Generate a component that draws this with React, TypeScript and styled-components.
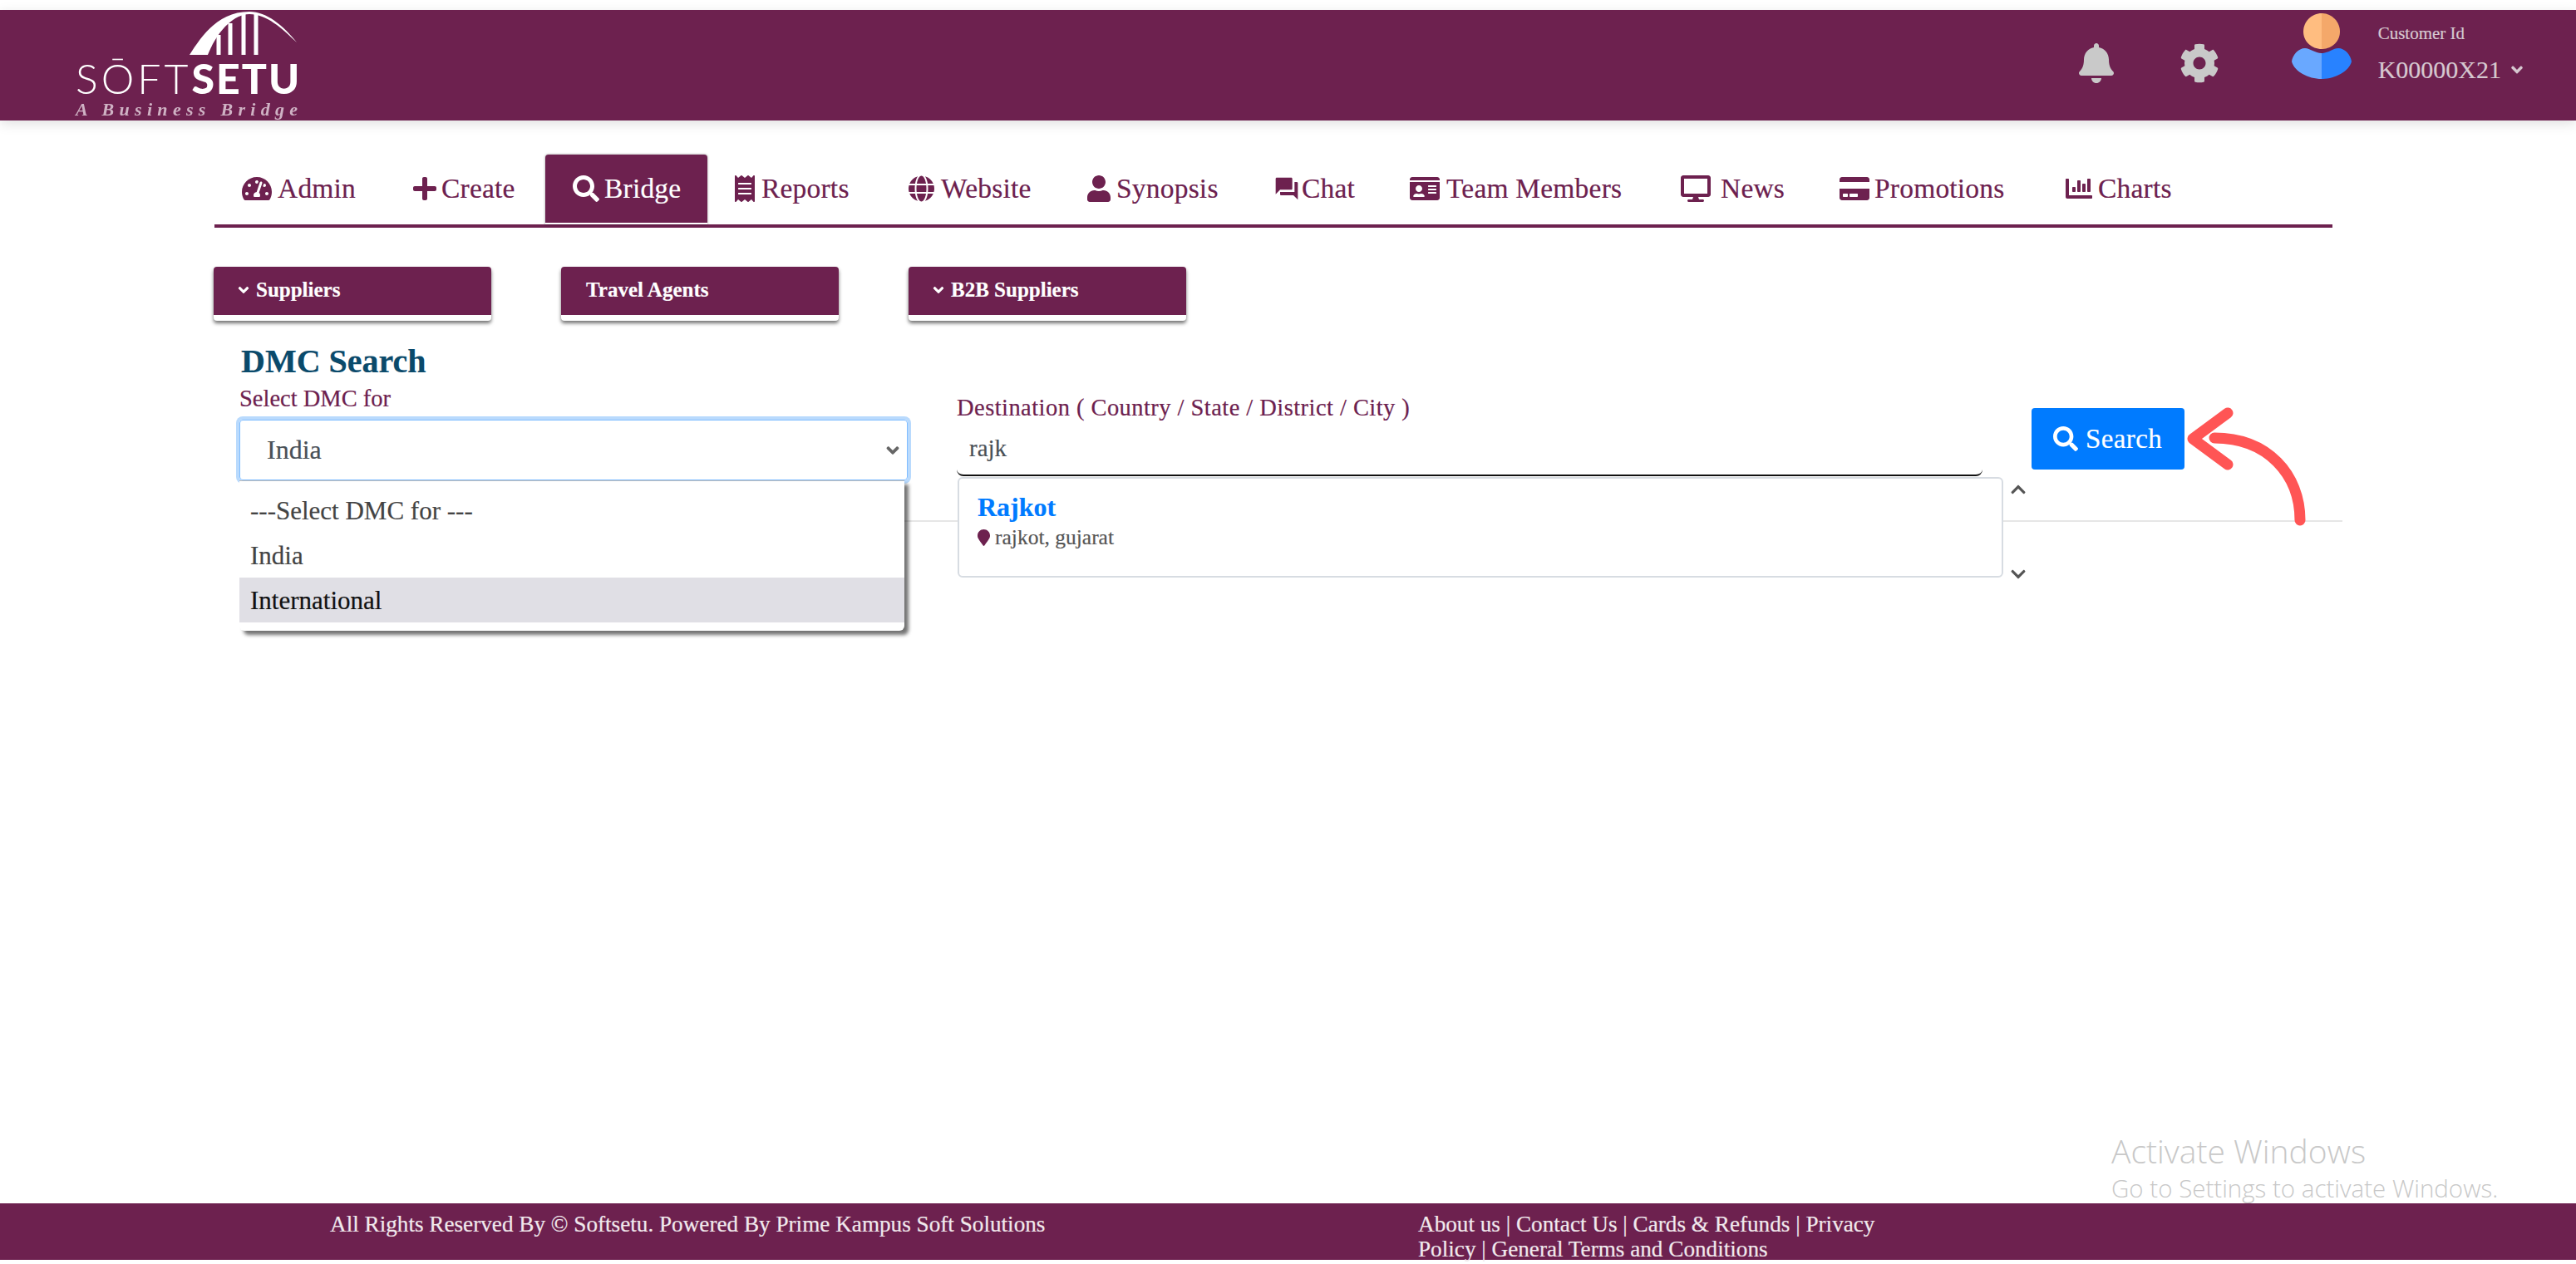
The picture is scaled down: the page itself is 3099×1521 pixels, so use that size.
import React from 'react';
import styled, { createGlobalStyle } from 'styled-components';
import {
  FaAngleDown,
  FaBell,
  FaChartBar,
  FaChevronDown,
  FaChevronUp,
  FaCog,
  FaCreditCard,
  FaDesktop,
  FaGlobe,
  FaIdCard,
  FaMapMarker,
  FaPlus,
  FaReceipt,
  FaSearch,
  FaTachometerAlt,
  FaUser,
} from 'react-icons/fa';
import { MdForum } from 'react-icons/md';

const PLUM = '#6d214f';

const GlobalStyle = createGlobalStyle`
  html, body {
    margin: 0;
    padding: 0;
    background: #fff;
  }
  body {
    font-family: 'Liberation Serif', serif;
    color: ${PLUM};
    -webkit-text-stroke: 0.2px;
  }
  input {
    -webkit-text-stroke: 0.2px;
  }
`

const Page = styled.div`
  position: relative;
  display: flex;
  flex-direction: column;
  height: 1521px;
  padding: 12px 0 5px;
  box-sizing: border-box;
  overflow: hidden;
`

const Header = styled.header`
  display: flex;
  align-items: flex-start;
  justify-content: space-between;
  flex: 0 0 133px;
  background: ${PLUM};
  box-shadow: 0 4px 14px rgba(0, 0, 0, 0.12);
`

const Logo = styled.div`
  display: flex;
  flex-direction: column;
  width: 272px;
  margin-left: 91px;
  filter: blur(0.5px);
  -webkit-text-stroke: 0;
`

const LogoArc = styled.svg`
  display: block;
  width: 272px;
  height: 56px;
  margin-top: 2px;
`

const LogoName = styled.div`
  display: flex;
  align-items: baseline;
  height: 48px;
  font-family: Lato, sans-serif;
  font-size: 50px;
  line-height: 48px;
  color: #fff;
`

const LogoSoft = styled.span`
  font-weight: 300;
  letter-spacing: 4px;
`

const LogoSetu = styled.span`
  font-weight: 900;
  letter-spacing: 2px;
`

const LogoTagline = styled.div`
  margin-top: 4px;
  font-family: 'Liberation Serif', serif;
  font-style: italic;
  font-weight: 700;
  font-size: 22px;
  line-height: 20px;
  letter-spacing: 6.3px;
  white-space: nowrap;
  color: #cfb2c4;
`

const HeaderRight = styled.div`
  display: flex;
  align-items: flex-start;
  margin-right: 60px;
`

const HeaderIcon = styled.div`
  display: flex;
  margin: 40px 0 0 ${(p: { $gap: number }) => p.$gap}px;
  font-size: 48px;
  color: #c9c9c9;
`

const Avatar = styled.svg`
  display: block;
  width: 72px;
  height: 80px;
  margin: 4px 0 0 87px;
`

const Customer = styled.div`
  margin: 15px 0 0 32px;
  color: #d6c8d0;
`

const CustomerLabel = styled.div`
  font-size: 21px;
  line-height: 26px;
`

const CustomerId = styled.div`
  display: flex;
  align-items: center;
  gap: 8px;
  margin-top: 14px;
  font-size: 30px;
  line-height: 34px;
  svg {
    font-size: 22px;
  }
`

const Main = styled.main`
  flex: 1;
  min-height: 0;
  padding-left: 257px;
`

const Tabs = styled.nav`
  display: flex;
  width: 2548px;
  height: 88px;
  margin: 41px 0 0 1px;
  box-sizing: border-box;
  border-bottom: 4px solid ${PLUM};
`

const Tab = styled.a<{ $active?: boolean; $gap: number; $width: number; $iconWidth: number }>`
  display: flex;
  flex: 0 0 ${(p) => p.$width}px;
  align-items: center;
  gap: ${(p) => p.$gap}px;
  height: 84px;
  padding-left: 33px;
  box-sizing: border-box;
  border-bottom: 2px solid ${(p) => (p.$active ? '#fff' : 'transparent')};
  border-radius: 4px 4px 0 0;
  font-size: 33.5px;
  letter-spacing: 0.2px;
  white-space: nowrap;
  color: ${(p) => (p.$active ? '#fff' : PLUM)};
  background: ${(p) => (p.$active ? PLUM : 'transparent')};
  box-shadow: ${(p) => (p.$active ? '0 0 3px rgba(0, 0, 0, 0.4)' : 'none')};
  svg {
    flex: none;
    width: ${(p) => p.$iconWidth}px;
    height: 32px;
  }
`

const SubRow = styled.div`
  display: flex;
  gap: 84px;
  margin-top: 47px;
`

const SubButton = styled.button`
  display: flex;
  align-items: center;
  gap: 5px;
  width: 334px;
  height: 65px;
  padding: 0 0 2px ${(p: { $pad: number }) => p.$pad}px;
  box-sizing: border-box;
  border: 0;
  border-bottom: 7px solid #fff;
  border-radius: 4px;
  font-family: inherit;
  font-size: 25px;
  font-weight: 700;
  color: #fff;
  background: ${PLUM};
  box-shadow: 0 3px 4px rgba(0, 0, 0, 0.55);
  svg {
    font-size: 20px;
  }
`

const Section = styled.section`
  margin-left: 31px;
`

const Title = styled.h2`
  margin: 27px 0 8px 2px;
  font-size: 40px;
  font-weight: 700;
  line-height: 44px;
  color: #0a4a6b;
`

const FormRow = styled.div`
  display: flex;
  align-items: flex-start;
`

const FieldLabel = styled.label`
  display: block;
  font-size: 28.5px;
  line-height: 30px;
  color: ${PLUM};
`

const DestinationLabel = styled(FieldLabel)`
  letter-spacing: 0.45px;
`

const SelectColumn = styled.div`
  position: relative;
  width: 804px;
`

const SelectBox = styled.div`
  display: flex;
  align-items: center;
  justify-content: space-between;
  height: 73px;
  margin-top: 10px;
  padding: 0 5px 0 32px;
  box-sizing: border-box;
  border: 1px solid #80bdff;
  border-radius: 4px;
  box-shadow: 0 0 0 4px #b9dafd;
  font-size: 32px;
  color: #495057;
  svg {
    font-size: 24px;
    color: #666;
  }
`

const DropdownMenu = styled.ul`
  position: absolute;
  top: 113px;
  left: 0;
  width: 800px;
  margin: 0;
  padding: 8px 0 10px;
  box-sizing: border-box;
  list-style: none;
  background: #fff;
  border-top: 1px solid #bbb;
  border-radius: 0 0 6px 6px;
  box-shadow: 5px 5px 4px rgba(0, 0, 0, 0.55);
`

const DropdownOption = styled.li<{ $hover?: boolean }>`
  height: 54px;
  padding-left: 13px;
  font-size: 31px;
  line-height: 56px;
  color: ${(p) => (p.$hover ? '#111' : '#444')};
  background: ${(p) => (p.$hover ? '#e0dfe5' : 'transparent')};
`

const DestinationColumn = styled.div`
  position: relative;
  width: 1234px;
  margin-left: 59px;
  padding-top: 11px;
`

const DestinationInput = styled.input`
  display: block;
  width: 100%;
  height: 67px;
  padding: 2px 15px 0;
  box-sizing: border-box;
  border: 0;
  border-bottom: 2px solid #111;
  border-radius: 0 0 8px 8px;
  outline: none;
  font-family: inherit;
  font-size: 29px;
  color: #495057;
`

const Suggestions = styled.div`
  position: absolute;
  top: 109px;
  left: 1px;
  width: 1258px;
  height: 121px;
  padding: 16px 22px;
  box-sizing: border-box;
  background: #fff;
  border: 2px solid #d7dce2;
  border-radius: 6px;
`

const SuggestionName = styled.div`
  font-size: 32px;
  font-weight: 700;
  line-height: 36px;
  color: #007bff;
`

const SuggestionPlace = styled.div`
  display: flex;
  align-items: center;
  gap: 6px;
  margin-top: 5px;
  font-size: 25.5px;
  line-height: 28px;
  color: #555;
  svg {
    width: 15px;
    height: 20px;
    color: ${PLUM};
  }
`

const ScrollArrow = styled.span<{ $top: number }>`
  position: absolute;
  top: ${(p) => p.$top}px;
  left: 1267px;
  display: flex;
  font-size: 20px;
  color: #555;
`

const SearchColumn = styled.div`
  position: relative;
  margin-left: 59px;
  padding-top: 26px;
`

const SearchButton = styled.button`
  display: flex;
  align-items: center;
  gap: 9px;
  width: 184px;
  height: 74px;
  padding: 0 0 0 26px;
  box-sizing: border-box;
  border: 0;
  border-radius: 4px;
  font-family: inherit;
  font-size: 33px;
  letter-spacing: 0.4px;
  color: #fff;
  background: #007bff;
  svg {
    font-size: 30px;
  }
`

const Arrow = styled.svg`
  position: absolute;
  top: 26px;
  left: 184px;
  width: 160px;
  height: 160px;
  overflow: visible;
`

const Rule = styled.hr`
  width: 2530px;
  height: 2px;
  margin: 48px 0 0;
  border: 0;
  background: #e6e6e6;
`

const ActivateNotice = styled.div`
  position: absolute;
  left: 2540px;
  top: 1362px;
  font-family: 'Open Sans', sans-serif;
  font-weight: 300;
  color: #c8c8c8;
  -webkit-text-stroke: 0;
`

const ActivateTitle = styled.div`
  font-size: 39px;
  line-height: 46px;
`

const ActivateText = styled.div`
  font-size: 29.5px;
  line-height: 44px;
`

const Footer = styled.footer`
  display: flex;
  align-items: flex-start;
  flex: 0 0 68px;
  min-height: 0;
  padding: 10px 0 0 397px;
  box-sizing: border-box;
  background: ${PLUM};
  color: #f1e9ed;
  font-size: 27.2px;
  line-height: 30px;
`

const FooterCopy = styled.div`
  flex: 0 0 1309px;
  white-space: nowrap;
`

const FooterLinks = styled.div`
  width: 570px;
`

const tabs = [
  { icon: <FaTachometerAlt />, label: 'Admin', gap: 7, width: 206, iconWidth: 36 },
  { icon: <FaPlus />, label: 'Create', gap: 6, width: 192, iconWidth: 28 },
  { icon: <FaSearch />, label: 'Bridge', active: true, gap: 6, width: 195, iconWidth: 32 },
  { icon: <FaReceipt />, label: 'Reports', gap: 8, width: 209, iconWidth: 24 },
  { icon: <FaGlobe />, label: 'Website', gap: 8, width: 215, iconWidth: 31 },
  { icon: <FaUser />, label: 'Synopsis', gap: 7, width: 224, iconWidth: 28 },
  { icon: <MdForum />, label: 'Chat', gap: 2, width: 164, iconWidth: 32 },
  { icon: <FaIdCard />, label: 'Team Members', gap: 8, width: 326, iconWidth: 36 },
  { icon: <FaDesktop />, label: 'News', gap: 12, width: 191, iconWidth: 36 },
  { icon: <FaCreditCard />, label: 'Promotions', gap: 6, width: 272, iconWidth: 36 },
  { icon: <FaChartBar />, label: 'Charts', gap: 7, width: 96, iconWidth: 32 },
]

export default function App() {
  return (
    <Page>
      <GlobalStyle />
      <Header>
        <Logo>
          <LogoArc viewBox='0 0 272 56'>
            <path
              d='M137 52 C 150 32 170 0 209 0 C 230 0 250 17 266 37 C 248 20 230 3 209 3 C 190 3 170 24 159 52 Z'
              fill='#fff'
            />
            <path d='M172 28 V52 M186 14 V52 M202 3 V52 M217 3 V52' stroke='#fff' strokeWidth='5' fill='none' />
          </LogoArc>
          <LogoName>
            <LogoSoft>SŌFT</LogoSoft>
            <LogoSetu>SETU</LogoSetu>
          </LogoName>
          <LogoTagline>A Business Bridge</LogoTagline>
        </Logo>
        <HeaderRight>
          <HeaderIcon $gap={0}>
            <FaBell />
          </HeaderIcon>
          <HeaderIcon $gap={76}>
            <FaCog />
          </HeaderIcon>
          <Avatar viewBox='0 0 72 80'>
            <path d='M36 0 C 24 0 14 10 14 22 C 14 34 24 43 36 43 Z' fill='#ffbd80' />
            <path d='M36 0 C 48 0 58 10 58 22 C 58 34 48 43 36 43 Z' fill='#f4a86a' />
            <path d='M36 48 C 28 48 22 42 16 42 C 8 42 1 50 0 58 C 3 70 20 79 36 79 Z' fill='#69a8ff' />
            <path d='M36 48 C 44 48 50 42 56 42 C 64 42 71 50 72 58 C 69 70 52 79 36 79 Z' fill='#2882ff' />
          </Avatar>
          <Customer>
            <CustomerLabel>Customer Id</CustomerLabel>
            <CustomerId>
              K00000X21
              <FaAngleDown />
            </CustomerId>
          </Customer>
        </HeaderRight>
      </Header>

      <Main>
        <Tabs>
          {tabs.map((tab) => (
            <Tab key={tab.label} $active={tab.active} $gap={tab.gap} $width={tab.width} $iconWidth={tab.iconWidth}>
              {tab.icon}
              {tab.label}
            </Tab>
          ))}
        </Tabs>

        <SubRow>
          <SubButton $pad={26}>
            <FaAngleDown />
            Suppliers
          </SubButton>
          <SubButton $pad={30}>Travel Agents</SubButton>
          <SubButton $pad={26}>
            <FaAngleDown />
            B2B Suppliers
          </SubButton>
        </SubRow>

        <Section>
          <Title>DMC Search</Title>
          <FormRow>
            <SelectColumn>
              <FieldLabel>Select DMC for</FieldLabel>
              <SelectBox>
                India
                <FaAngleDown />
              </SelectBox>
              <DropdownMenu>
                <DropdownOption>---Select DMC for ---</DropdownOption>
                <DropdownOption>India</DropdownOption>
                <DropdownOption $hover>International</DropdownOption>
              </DropdownMenu>
            </SelectColumn>
            <DestinationColumn>
              <DestinationLabel>Destination ( Country / State / District / City )</DestinationLabel>
              <DestinationInput defaultValue='rajk' readOnly />
              <Suggestions>
                <SuggestionName>Rajkot</SuggestionName>
                <SuggestionPlace>
                  <FaMapMarker />
                  rajkot, gujarat
                </SuggestionPlace>
              </Suggestions>
              <ScrollArrow $top={114}>
                <FaChevronUp />
              </ScrollArrow>
              <ScrollArrow $top={216}>
                <FaChevronDown />
              </ScrollArrow>
            </DestinationColumn>
            <SearchColumn>
              <SearchButton>
                <FaSearch />
                Search
              </SearchButton>
              <Arrow viewBox='0 0 160 160'>
                <path
                  d='M139 135 C 139 80 100 36 36 36 M52 6 L10 37 L52 68'
                  stroke='#ff5555'
                  strokeWidth='13'
                  strokeLinecap='round'
                  strokeLinejoin='round'
                  fill='none'
                />
              </Arrow>
            </SearchColumn>
          </FormRow>
          <Rule />
        </Section>
      </Main>

      <ActivateNotice>
        <ActivateTitle>Activate Windows</ActivateTitle>
        <ActivateText>Go to Settings to activate Windows.</ActivateText>
      </ActivateNotice>

      <Footer>
        <FooterCopy>All Rights Reserved By © Softsetu. Powered By Prime Kampus Soft Solutions</FooterCopy>
        <FooterLinks>
          About us | Contact Us | Cards &amp; Refunds | Privacy Policy | General Terms and Conditions
        </FooterLinks>
      </Footer>
    </Page>
  )
}
